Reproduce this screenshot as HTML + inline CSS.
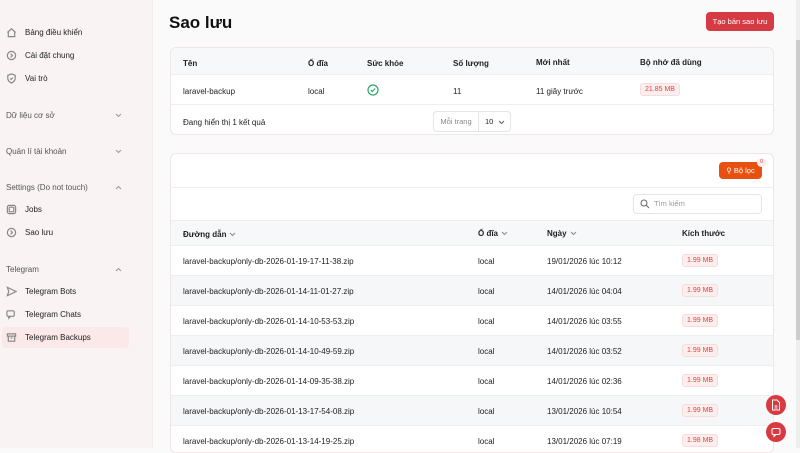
<!DOCTYPE html><html><head><meta charset="utf-8"><style>
*{box-sizing:border-box;margin:0;padding:0}
body{width:800px;height:448px;overflow:hidden;background:#fafafb;font-family:"Liberation Sans","Noto Sans CJK SC",sans-serif;color:#222;font-size:8px;position:relative}
.sb{position:absolute;left:0;top:0;width:153px;height:448px;background:#faf3f3;border-right:1px solid #eee}
.it{position:absolute;left:6px;display:flex;align-items:center;font-size:8px;color:#222}
.it svg{width:11px;height:11px;margin-right:8px;stroke:#888;fill:none;stroke-width:1.3}
.grp{position:absolute;left:6px;width:116px;font-size:8px;color:#555;display:flex;justify-content:space-between;align-items:center}
.card{position:absolute;left:170px;width:604px;background:#fff;border:1px solid #f0e6e6;border-radius:6px;overflow:hidden}
.abs{position:absolute}
.badge{position:absolute;background:#fdeeee;color:#d44;border:1px solid #f6dcdc;border-radius:3px;font-size:7px;padding:2px 4px}
.chev{display:inline-block;vertical-align:middle;margin-left:3px}
</style></head><body>
<div class="sb">
<div class="it" style="top:27px"><svg viewBox="0 0 12 12"><path d="M1.5 6L6 2l4.5 4M2.5 5v5.5h7V5"/></svg>Bảng điều khiển</div>
<div class="it" style="top:50px"><svg viewBox="0 0 12 12"><circle cx="6" cy="6" r="4.5"/><path d="M5 4l2 2-2 2"/></svg>Cài đặt chung</div>
<div class="it" style="top:73px"><svg viewBox="0 0 12 12"><path d="M6 1l4 1.5v3.5c0 2.5-2 4-4 5-2-1-4-2.5-4-5V2.5z"/><path d="M4.5 6l1 1 2-2"/></svg>Vai trò</div>
<div class="grp" style="top:111px"><span>Dữ liệu cơ sở</span><svg width="7" height="5" viewBox="0 0 7 5"><path d="M1 1l2.5 2.5L6 1" fill="none" stroke="#999"/></svg></div>
<div class="grp" style="top:147px"><span>Quản lí tài khoản</span><svg width="7" height="5" viewBox="0 0 7 5"><path d="M1 1l2.5 2.5L6 1" fill="none" stroke="#999"/></svg></div>
<div class="grp" style="top:183px"><span>Settings (Do not touch)</span><svg width="7" height="5" viewBox="0 0 7 5"><path d="M1 4l2.5-2.5L6 4" fill="none" stroke="#999"/></svg></div>
<div class="it" style="top:204px"><svg viewBox="0 0 12 12"><rect x="1.5" y="1.5" width="9" height="9" rx="2"/><rect x="3.5" y="3.5" width="5" height="5" rx="1"/></svg>Jobs</div>
<div class="it" style="top:227px"><svg viewBox="0 0 12 12"><circle cx="6" cy="6" r="4.5"/><path d="M5 4l2 2-2 2"/></svg>Sao lưu</div>
<div class="grp" style="top:265px"><span>Telegram</span><svg width="7" height="5" viewBox="0 0 7 5"><path d="M1 4l2.5-2.5L6 4" fill="none" stroke="#999"/></svg></div>
<div class="it" style="top:286px"><svg viewBox="0 0 12 12"><path d="M1.5 1.5L11 6l-9.5 4.5L3 6z"/></svg>Telegram Bots</div>
<div class="it" style="top:309px"><svg viewBox="0 0 12 12"><rect x="1" y="2" width="8" height="6" rx="1.5"/><path d="M3 8v2l2-2"/></svg>Telegram Chats</div>
<div style="position:absolute;left:2px;top:327px;width:127px;height:21px;background:#fbe8e8;border-radius:4px"></div>
<div class="it" style="top:332px"><svg viewBox="0 0 12 12"><rect x="1.5" y="2" width="9" height="2.5"/><path d="M2.5 4.5v5.5h7V4.5M5 6.5h2"/></svg>Telegram Backups</div>
</div>
<div class="abs" style="left:169px;top:13px;font-size:17px;font-weight:bold;color:#111">Sao lưu</div>
<div class="abs" style="left:706px;top:12px;width:68px;height:19px;background:#d63a42;border-radius:4px;color:#fff;font-size:7.5px;text-align:center;line-height:19px">Tạo bản sao lưu</div>
<div class="card" style="top:47px;height:88px">
<div class="abs" style="left:0;top:0;width:604px;height:27px;background:#f6f8f9;border-bottom:1px solid #eee"></div>
<div class="abs" style="left:12px;top:11px;font-weight:bold">Tên</div>
<div class="abs" style="left:137px;top:11px;font-weight:bold">Ổ đĩa</div>
<div class="abs" style="left:196px;top:11px;font-weight:bold">Sức khỏe</div>
<div class="abs" style="left:282px;top:11px;font-weight:bold">Số lượng</div>
<div class="abs" style="left:365px;top:10px;font-weight:bold">Mới nhất</div>
<div class="abs" style="left:469px;top:10px;font-weight:bold">Bộ nhớ đã dùng</div>
<div class="abs" style="left:12px;top:39px">laravel-backup</div>
<div class="abs" style="left:137px;top:39px">local</div>
<svg class="abs" style="left:196px;top:36px" width="12" height="12" viewBox="0 0 12 12"><circle cx="6" cy="6" r="5" fill="none" stroke="#2fa56a" stroke-width="1.2"/><path d="M3.8 6l1.5 1.5 3-3" fill="none" stroke="#2fa56a" stroke-width="1.2"/></svg>
<div class="abs" style="left:282px;top:39px">11</div>
<div class="abs" style="left:365px;top:39px">11 giây trước</div>
<div class="badge" style="left:469px;top:35px">21.85 MB</div>
<div class="abs" style="left:0;top:56px;width:604px;border-top:1px solid #eee"></div>
<div class="abs" style="left:12px;top:70px">Đang hiển thị 1 kết quả</div>
<div class="abs" style="left:262px;top:63px;width:78px;height:21px;border:1px solid #e5e5e5;border-radius:4px;display:flex;font-size:7.5px;line-height:19px"><span style="width:45px;color:#888;text-align:center;border-right:1px solid #e5e5e5">Mỗi trang</span><span style="padding-left:6px">10 <svg class="chev" width="7" height="5" viewBox="0 0 7 5"><path d="M1 1l2.5 2.5L6 1" fill="none" stroke="#666"/></svg></span></div>
</div>
<div class="card" style="top:153px;height:300px">
<div class="abs" style="left:548px;top:8px;width:43px;height:17px;background:#e8500f;border-radius:4px;color:#fff;font-size:7.5px;line-height:17px;text-align:center">⚲ Bộ lọc</div>
<div class="abs" style="left:586px;top:4px;width:9px;height:9px;border-radius:50%;background:#fdeeee;color:#d44;font-size:5px;text-align:center;line-height:9px">0</div>
<div class="abs" style="left:0;top:33px;width:604px;border-top:1px solid #eee"></div>
<div class="abs" style="left:462px;top:40px;width:129px;height:20px;border:1px solid #e5e5e5;border-radius:4px;color:#999;line-height:18px;padding-left:20px;font-size:7.5px">Tìm kiếm</div>
<svg class="abs" style="left:469px;top:45px" width="10" height="10" viewBox="0 0 10 10"><circle cx="4" cy="4" r="3" fill="none" stroke="#666"/><path d="M6.3 6.3L9 9" stroke="#666"/></svg>
<div class="abs" style="left:0;top:66px;width:604px;height:26px;background:#f6f8f9;border-top:1px solid #eee;border-bottom:1px solid #eee"></div>
<div class="abs" style="left:12px;top:76px;font-weight:bold">Đường dẫn<svg class="chev" width="7" height="5" viewBox="0 0 7 5"><path d="M1 1l2.5 2.5L6 1" fill="none" stroke="#888"/></svg></div>
<div class="abs" style="left:307px;top:75px;font-weight:bold">Ổ đĩa<svg class="chev" width="7" height="5" viewBox="0 0 7 5"><path d="M1 1l2.5 2.5L6 1" fill="none" stroke="#888"/></svg></div>
<div class="abs" style="left:376px;top:75px;font-weight:bold">Ngày<svg class="chev" width="7" height="5" viewBox="0 0 7 5"><path d="M1 1l2.5 2.5L6 1" fill="none" stroke="#888"/></svg></div>
<div class="abs" style="left:511px;top:75px;font-weight:bold">Kích thước</div>
<div id="rows"></div>
</div>
<div class="abs" style="left:766px;top:395px;width:20px;height:20px;border-radius:50%;background:#d63a42"></div>
<svg class="abs" style="left:771px;top:399px" width="10" height="12" viewBox="0 0 10 12"><path d="M1.5 1h4.5l2.5 2.5V11h-7z M3.5 7h3M3.5 9h3" fill="none" stroke="#fff"/></svg>
<div class="abs" style="left:766px;top:422px;width:20px;height:20px;border-radius:50%;background:#d63a42"></div>
<svg class="abs" style="left:771px;top:427px" width="11" height="11" viewBox="0 0 11 11"><rect x="1" y="1.5" width="8" height="6" rx="1.5" fill="none" stroke="#fff"/><path d="M3 7.5v2l2-2" fill="none" stroke="#fff"/></svg>
<div class="abs" style="left:796px;top:0;width:4px;height:448px;background:#eee"></div>
<div class="abs" style="left:796px;top:40px;width:4px;height:300px;background:#ccc"></div>
<script>
var d=[["19-17-11-38","19/01/2026 lúc 10:12","1.99"],["14-11-01-27","14/01/2026 lúc 04:04","1.99"],["14-10-53-53","14/01/2026 lúc 03:55","1.99"],["14-10-49-59","14/01/2026 lúc 03:52","1.99"],["14-09-35-38","14/01/2026 lúc 02:36","1.99"],["13-17-54-08","13/01/2026 lúc 10:54","1.99"],["13-14-19-25","13/01/2026 lúc 07:19","1.98"]];
var h="";d.forEach(function(r,i){var t=92+i*30;h+='<div class="abs" style="left:0;top:'+t+'px;width:604px;height:30px;background:'+(i%2?'#f5f7f8':'#fff')+';border-bottom:1px solid #eee"></div>'+
'<div class="abs" style="left:12px;top:'+(t+11)+'px">laravel-backup/only-db-2026-01-'+r[0]+'.zip</div><div class="abs" style="left:307px;top:'+(t+11)+'px">local</div><div class="abs" style="left:376px;top:'+(t+11)+'px">'+r[1]+'</div><div class="badge" style="left:511px;top:'+(t+8)+'px">'+r[2]+' MB</div>';});
document.getElementById("rows").outerHTML=h;
</script>
</body></html>
